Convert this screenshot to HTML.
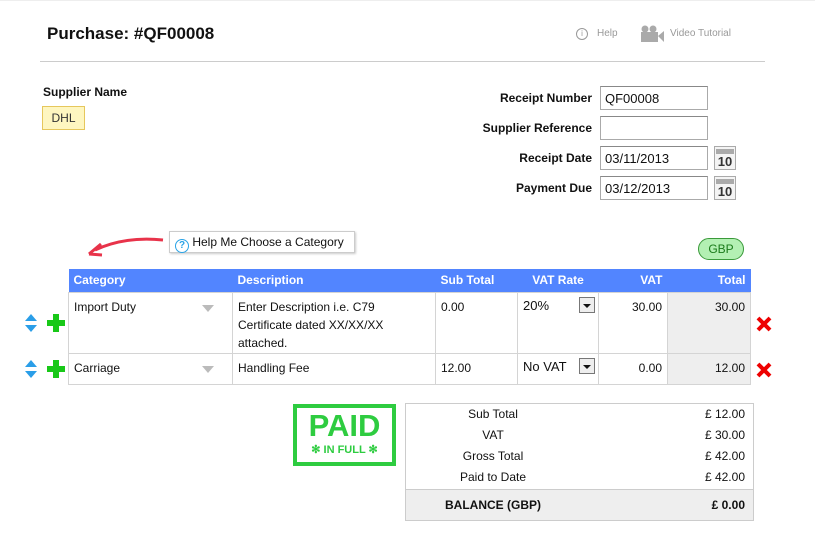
<!DOCTYPE html>
<html><head><meta charset="utf-8"><style>
*{margin:0;padding:0;box-sizing:border-box}
body{width:815px;height:534px;background:#fff;font-family:"Liberation Sans",Arial,sans-serif;font-size:12px;color:#111;position:relative;overflow:hidden}
.a{position:absolute}
.lbl{font-weight:bold;text-align:right;width:200px;font-size:12px}
.inp{border:1px solid #aaa;border-top-color:#888;height:24px;width:108px;padding:4px 4px;font-size:13px}
.cal{width:22px;height:24px;border:1px solid #aaa;background:#f4f4f4;font-weight:bold;font-size:13px;text-align:center;line-height:30px;color:#333;overflow:hidden}
.cal:before{content:"";position:absolute;left:1px;top:2px;width:18px;height:5px;background:#aaa}
table{border-collapse:collapse;table-layout:fixed}
th{background:#5285ff;color:#fff;font-size:12px;height:23px;padding:0 5px;text-align:left}
td{border:1px solid #d4d4d4;vertical-align:top;padding:7px 5px 0;font-size:12px;overflow:hidden}
.sel{position:absolute;right:3px;top:4px;width:16px;height:16px;border:1px solid #777;background:#eee}
.sel:after{content:"";position:absolute;left:3px;top:6px;border:4px solid transparent;border-top:4px solid #111}
.tri{position:absolute;right:18px;top:12px;border:6px solid transparent;border-top:7px solid #bbb}
</style></head><body>
<div class="a" style="left:0;top:0;width:815px;border-top:1px solid #eee"></div>
<div class="a" style="left:47px;top:24px;font-size:17px;font-weight:bold">Purchase: #QF00008</div>
<div class="a" style="left:576px;top:28px;width:12px;height:12px;border:1px solid #999;border-radius:50%;font-size:8px;text-align:center;color:#999;line-height:10px">i</div>
<div class="a" style="left:597px;top:28px;color:#999;font-size:10px">Help</div>
<svg class="a" style="left:640px;top:25px" width="25" height="18"><circle cx="5" cy="4" r="3.5" fill="#aaa"/><circle cx="13" cy="4" r="3.5" fill="#aaa"/><rect x="1" y="7" width="17" height="10" fill="#aaa"/><path d="M18 11 L24 6 V17 Z" fill="#aaa"/></svg>
<div class="a" style="left:670px;top:28px;color:#999;font-size:10px">Video Tutorial</div>
<div class="a" style="left:40px;top:61px;width:725px;border-top:1px solid #ccc"></div>
<div class="a" style="left:43px;top:85px;font-weight:bold">Supplier Name</div>
<div class="a" style="left:42px;top:106px;width:43px;height:24px;background:#fef6c0;border:1px solid #e6c75c;text-align:center;line-height:22px;color:#333">DHL</div>
<div class="a lbl" style="left:392px;top:91px">Receipt Number</div>
<div class="a lbl" style="left:392px;top:121px">Supplier Reference</div>
<div class="a lbl" style="left:392px;top:151px">Receipt Date</div>
<div class="a lbl" style="left:392px;top:181px">Payment Due</div>
<div class="a inp" style="left:600px;top:86px">QF00008</div>
<div class="a inp" style="left:600px;top:116px"></div>
<div class="a inp" style="left:600px;top:146px">03/11/2013</div>
<div class="a inp" style="left:600px;top:176px">03/12/2013</div>
<div class="a cal" style="left:714px;top:146px">10</div>
<div class="a cal" style="left:714px;top:176px">10</div>
<svg class="a" style="left:85px;top:234px" width="80" height="30"><path d="M78 6 Q40 2 10 16" stroke="#e8334a" stroke-width="3" fill="none"/><path d="M4 20 L16 10 M4 20 L17 21" stroke="#e8334a" stroke-width="3" fill="none"/></svg>
<div class="a" style="left:169px;top:231px;width:186px;height:22px;border:1px solid #ccc;box-shadow:1px 1px 2px #ccc;padding:3px 5px;font-size:12px"><span style="display:inline-block;width:14px;height:14px;border:1.5px solid #29a3e6;border-radius:50%;color:#29a3e6;font-size:10px;font-weight:bold;text-align:center;line-height:12px;vertical-align:-2px">?</span> Help Me Choose a Category</div>
<div class="a" style="left:698px;top:238px;width:46px;height:22px;border:1px solid #3a9a3a;background:#b3f0b3;border-radius:11px;text-align:center;line-height:20px;color:#1a7a1a;font-size:12px">GBP</div>
<table class="a" style="left:68px;top:269px;width:682px">
<tr><th style="width:164px">Category</th><th style="width:203px">Description</th><th style="width:82px">Sub Total</th><th style="width:81px;text-align:center">VAT Rate</th><th style="width:69px;text-align:right">VAT</th><th style="width:83px;text-align:right">Total</th></tr>
<tr><td style="position:relative;height:61px">Import Duty<span class="tri"></span></td><td style="line-height:18px;padding-top:5px">Enter Description i.e. C79 Certificate dated XX/XX/XX attached.</td><td>0.00</td><td style="position:relative;font-size:13px;padding-top:5px">20%<span class="sel"></span></td><td style="text-align:right">30.00</td><td style="text-align:right;background:#eee">30.00</td></tr>
<tr><td style="position:relative;height:31px">Carriage<span class="tri"></span></td><td>Handling Fee</td><td>12.00</td><td style="position:relative;font-size:13px;padding-top:5px">No VAT<span class="sel"></span></td><td style="text-align:right">0.00</td><td style="text-align:right;background:#eee">12.00</td></tr>
</table>
<svg class="a" style="left:24px;top:314px" width="14" height="18"><path d="M7 0 L13 7 H1Z M7 18 L13 11 H1Z" fill="#2a9ee8"/></svg>
<svg class="a" style="left:24px;top:360px" width="14" height="18"><path d="M7 0 L13 7 H1Z M7 18 L13 11 H1Z" fill="#2a9ee8"/></svg>
<svg class="a" style="left:47px;top:314px" width="18" height="18"><path d="M6 0h6v6h6v6h-6v6h-6v-6h-6v-6h6z" fill="#18c818"/></svg>
<svg class="a" style="left:47px;top:360px" width="18" height="18"><path d="M6 0h6v6h6v6h-6v6h-6v-6h-6v-6h6z" fill="#18c818"/></svg>
<svg class="a" style="left:756px;top:316px" width="16" height="16"><path d="M2 2L14 14M14 2L2 14" stroke="#e00" stroke-width="4"/></svg>
<svg class="a" style="left:756px;top:362px" width="16" height="16"><path d="M2 2L14 14M14 2L2 14" stroke="#e00" stroke-width="4"/></svg>
<div class="a" style="left:293px;top:404px;width:103px;height:62px;border:4px solid #2ecc40;color:#2ecc40;text-align:center">
<div style="font-size:31px;font-weight:bold;line-height:34px;margin-top:1px">PAID</div>
<div style="font-size:11px;font-weight:bold;line-height:14px">✻ IN FULL ✻</div></div>
<div class="a" style="left:405px;top:403px;width:349px;height:118px;border:1px solid #ccc">
<div style="position:absolute;left:0;top:85px;width:347px;height:31px;background:#eee;border-top:1px solid #ccc"></div>
</div>
<div class="a" style="left:405px;top:404px;width:176px;text-align:center;line-height:21px">Sub Total<br>VAT<br>Gross Total<br>Paid to Date</div>
<div class="a" style="left:600px;top:404px;width:145px;text-align:right;line-height:21px">£ 12.00<br>£ 30.00<br>£ 42.00<br>£ 42.00</div>
<div class="a" style="left:405px;top:498px;width:176px;text-align:center;font-weight:bold">BALANCE (GBP)</div>
<div class="a" style="left:600px;top:498px;width:145px;text-align:right;font-weight:bold">£ 0.00</div>
</body></html>
